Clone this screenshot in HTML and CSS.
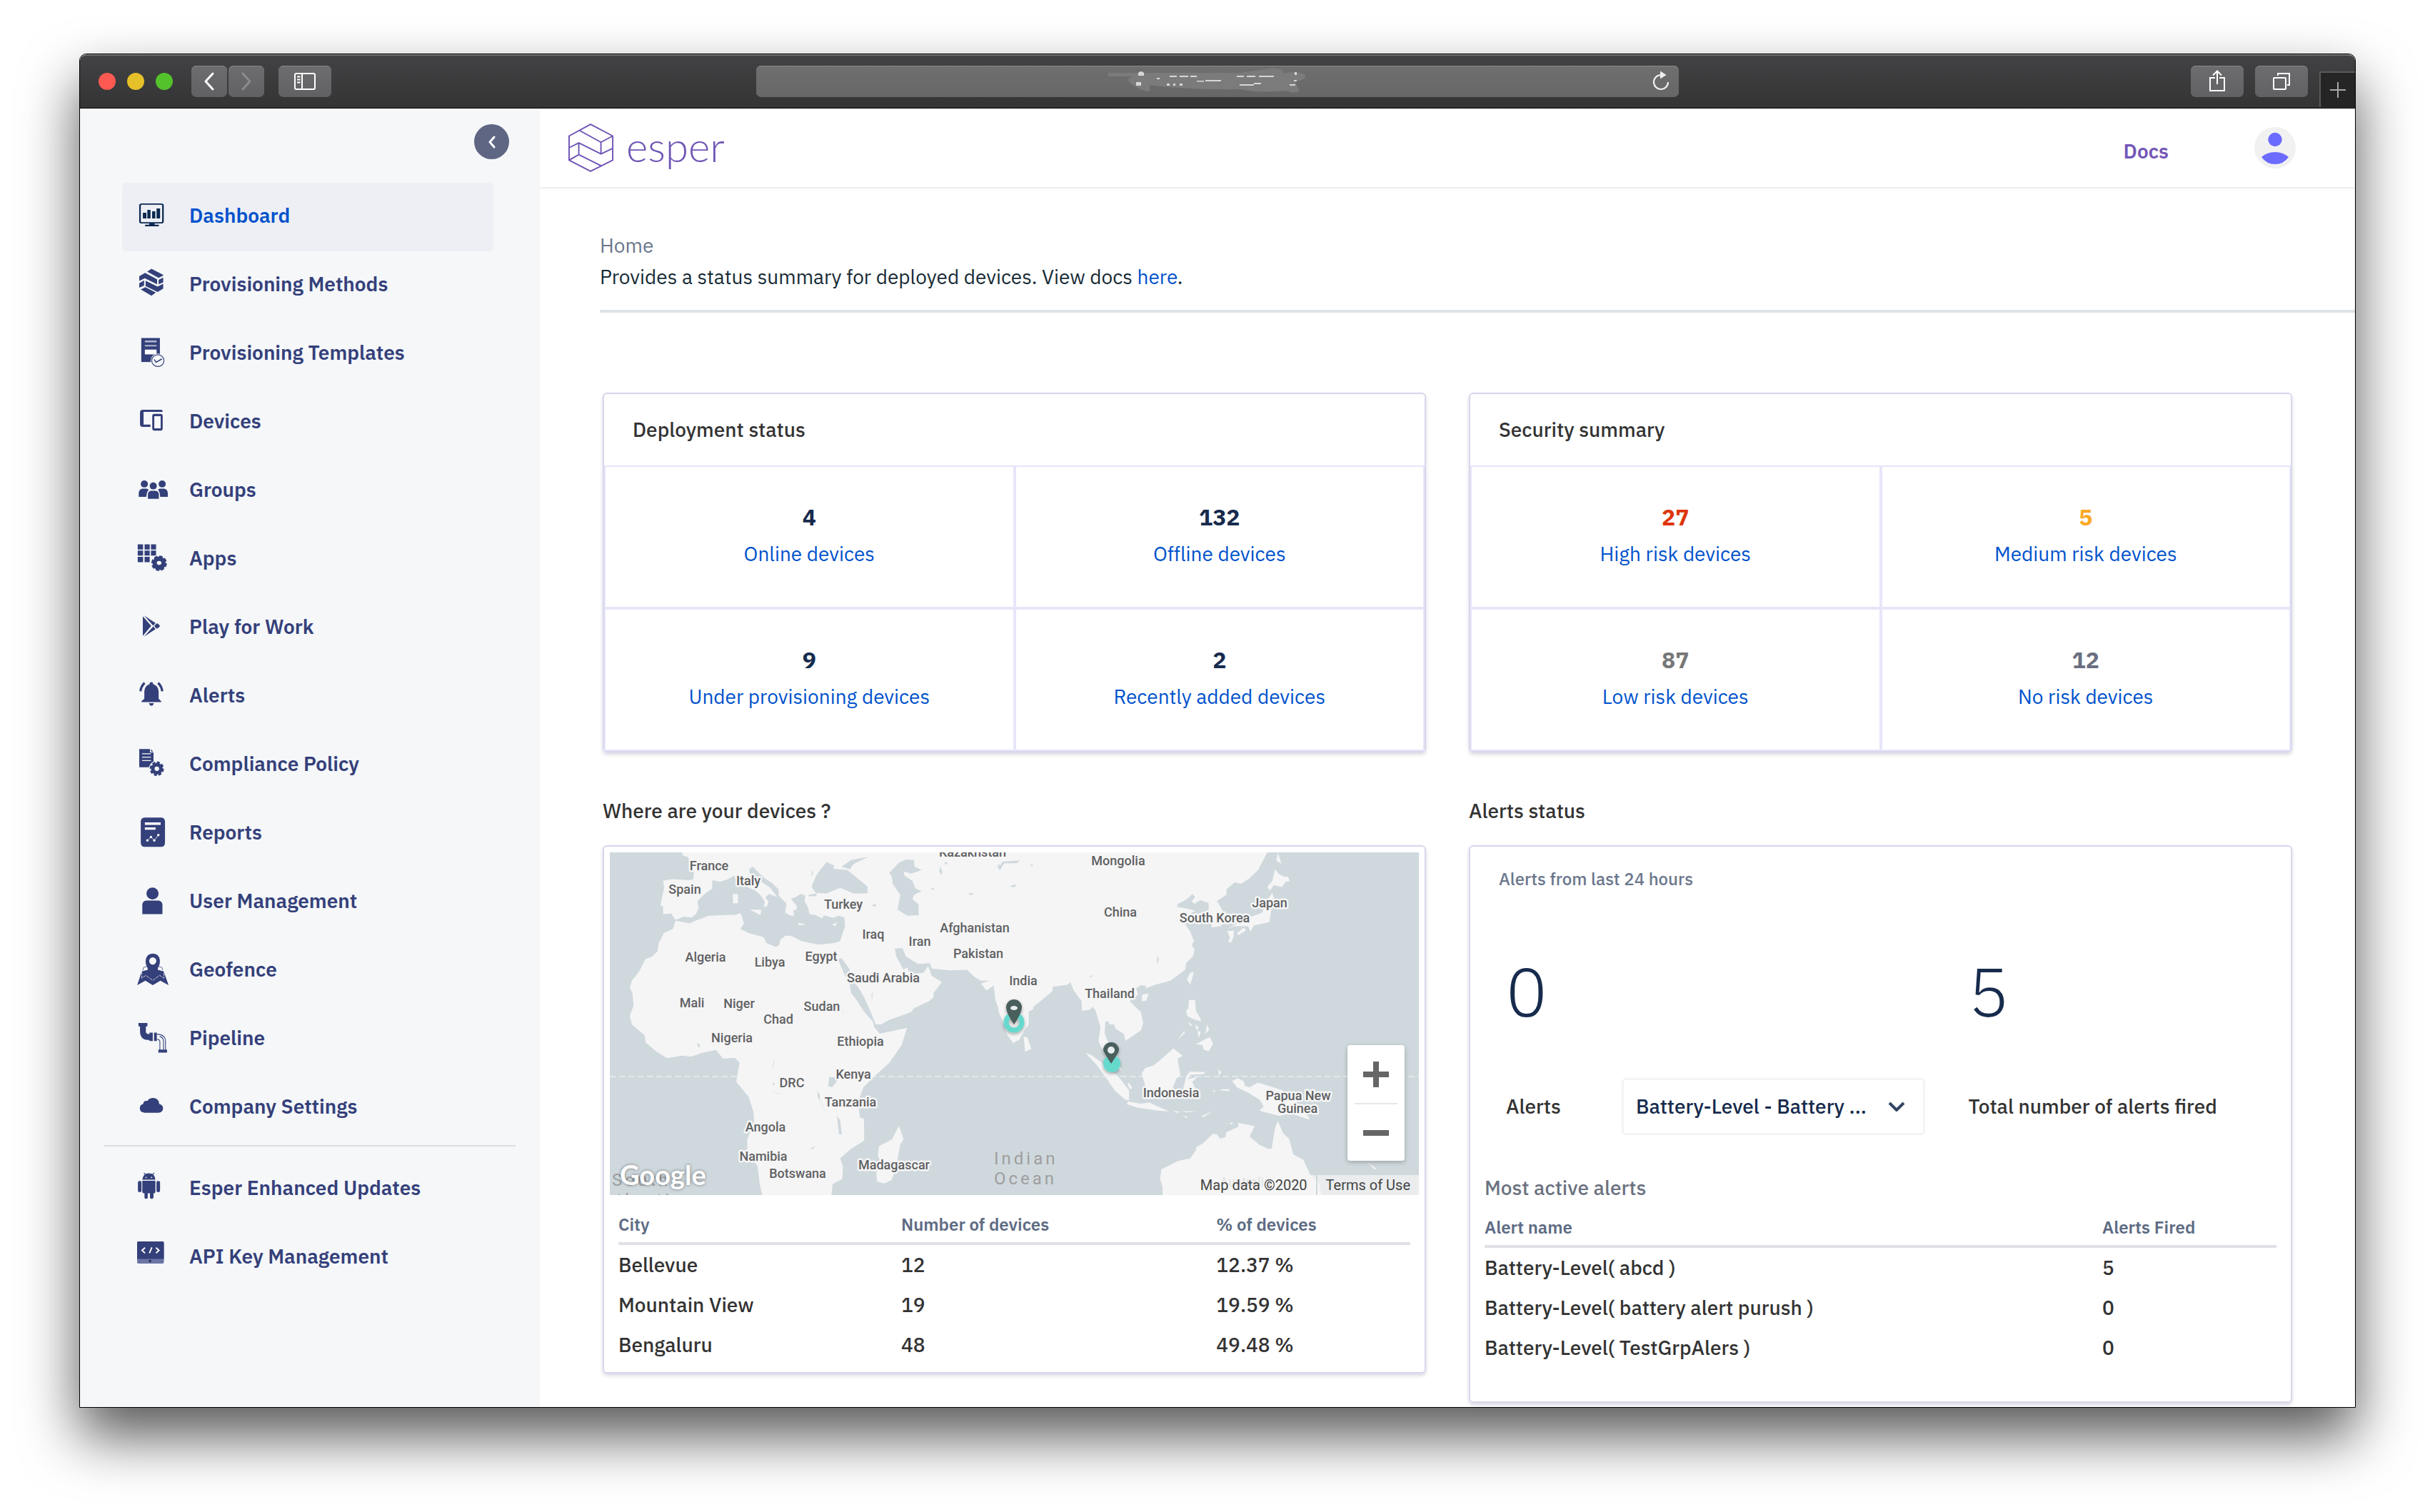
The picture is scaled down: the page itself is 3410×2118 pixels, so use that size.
FILE: index.html
```html
<!DOCTYPE html>
<html lang="en">
<head>
<meta charset="utf-8">
<title>Esper Dashboard</title>
<link rel="stylesheet" href="styles.css">
</head>
<body>
<div class="window">
  <div class="toolbar">
    <div class="toolbar-left">
      <div class="lights"><span class="light red"></span><span class="light yellow"></span><span class="light green"></span></div>
      <div class="history">
        <button class="tool nav-tool" aria-label="Back"><svg width="50" height="44" viewBox="0 0 50 44"><path d="M30 11L20 22L30 33" fill="none" stroke="#fff" stroke-width="3" stroke-linecap="round" stroke-linejoin="round"/></svg></button>
        <button class="tool nav-tool" aria-label="Forward"><svg width="50" height="44" viewBox="0 0 50 44"><path d="M20 11L30 22L20 33" fill="none" stroke="#8b8b8d" stroke-width="3" stroke-linecap="round" stroke-linejoin="round"/></svg></button>
      </div>
      <button class="tool" aria-label="Show sidebar"><svg width="74" height="44" viewBox="0 0 74 44"><g fill="none" stroke="#fff" stroke-width="2"><rect x="23" y="11" width="28" height="22" rx="2"/><path d="M33 11V33M26 15.500H30.500M26 19.500H30.500M26 23.500H30.500"/></g></svg></button>
    </div>
    <div class="address">
      <svg class="address-mark" width="278" height="40" viewBox="0 0 278 40" aria-hidden="true"><path d="M0 8H185L225 2Q245 0 246 9Q262 4 275 10Q280 18 262 20L268 34Q258 38 250 33Q215 37 185 31Q110 32 58 25Q60 35 54 34Q34 28 27 18Q32 12 40 13H0Z" fill="#7b7b7b"/><g fill="#efefef"><path d="M42 8Q46 4 50 8V12H42ZM39 21H46V26H39ZM86 12H96V14H86ZM100 12H112V14H100ZM115 12H124V14H115ZM82 23H86V26H82ZM91 23H94V26H91ZM100 23H104V26H100ZM124 19H134V20.500H124ZM136 18H158V20H136ZM180 12H190V14H180ZM194 12H206V14H194ZM211 12H232V14H211ZM184 24H204V26H184ZM204 22H214V24H204ZM261 7H264V11H261ZM260 18H264V20H260ZM254 24H262V26H254ZM68 15H72V17H68Z" opacity=".8"/></g></svg>
      <button class="reload" aria-label="Reload"><svg width="26" height="30" viewBox="0 0 26 30"><path d="M13 6A10 10 0 1 0 23 16" fill="none" stroke="#f0f0f0" stroke-width="2.200"/><path d="M12 0.500L20.500 6L12 11.500Z" fill="#f0f0f0"/></svg></button>
    </div>
    <div class="toolbar-right">
      <button class="tool" aria-label="Share"><svg width="74" height="44" viewBox="0 0 74 44"><g fill="none" stroke="#fff" stroke-width="2"><path d="M34 17H27V35H47V17H40M37 26V8M31 13.500L37 7.500L43 13.500"/></g></svg></button>
      <button class="tool" aria-label="Show tabs"><svg width="74" height="44" viewBox="0 0 74 44"><g fill="none" stroke="#fff" stroke-width="2"><rect x="26" y="17" width="17" height="16" rx="1"/><path d="M32 14V11H48V27H45"/></g></svg></button>
      <button class="new-tab" aria-label="New tab"><svg width="24" height="24" viewBox="0 0 24 24"><path d="M12 1V23M1 12H23" stroke="#a9a9a9" stroke-width="2"/></svg></button>
    </div>
  </div>

  <div class="app">
    <aside class="sidebar">
      <button class="collapse" aria-label="Collapse menu"><svg width="20" height="20" viewBox="0 0 20 20"><path d="M13 3L7 10L13 17" fill="none" stroke="#fff" stroke-width="3" stroke-linecap="round" stroke-linejoin="round"/></svg></button>
      <nav>
        <ul class="menu">
          <li><a class="item active" href="#"><svg class="icon" viewBox="0 0 56 56"><g transform="translate(-104 -226) scale(.4464 .3333)" fill="#0a2850"><rect x="260" y="707.500" width="72" height="79" rx="6" fill="none" stroke="#0a2850" stroke-width="5"/><path d="M269 744H280V768H269ZM283 732H293V768H283ZM298 738H308V768H298ZM312 726H323V768H312ZM289 787H306V794H319V801H276V794H289Z"/></g></svg>Dashboard</a></li>
          <li><a class="item" href="#"><svg class="icon" viewBox="0 0 56 56"><path transform="translate(-54 -12) scale(.3571 .3954)" d="M213 52L230 42L276 63V66L258 74ZM182 68L205 56L252 79V97L204 75L182 85ZM258 81L276 73V90L258 97ZM182 93L201 83V101L182 109ZM207 84L254 105L276 95V112L254 124L207 103ZM206 107L247 126L230 137L188 115Z"/></svg>Provisioning Methods</a></li>
          <li><a class="item" href="#"><svg class="icon" viewBox="0 0 56 56"><g transform="translate(-54 -108) scale(.3571 .3954)"><rect x="190" y="287" width="73" height="85"/><path d="M204 296H250V302H204ZM204 312H250V317H204Z" fill="#b4b9d0"/><path d="M204 328H250V345H204Z" fill="#fff"/><ellipse cx="255" cy="367" rx="28" ry="25" fill="#f5f7f9"/><ellipse cx="255" cy="367" rx="24" ry="21" fill="#f5f7f9" stroke="#34407a" stroke-width="3"/><path d="M241 363L248 373L271 361" fill="none" stroke="#34407a" stroke-width="4"/></g></svg>Provisioning Templates</a></li>
          <li><a class="item" href="#"><svg class="icon" viewBox="0 0 56 56"><g transform="translate(-54 -204) scale(.3571 .3954)"><path d="M268 541H195Q185 541 185 551V592Q185 602 195 602H226V594H199V549H274Q274 541 268 541Z"/><rect x="237" y="560" width="33" height="51" rx="4" fill="none" stroke="#34407a" stroke-width="8"/></g></svg>Devices</a></li>
          <li><a class="item" href="#"><svg class="icon" viewBox="0 0 56 56"><g transform="translate(-54 -300) scale(.3571 .3954)"><ellipse cx="202" cy="804" rx="14" ry="12.500"/><ellipse cx="272" cy="804" rx="14" ry="12.500"/><ellipse cx="237" cy="811" rx="14" ry="12.500"/><path d="M180 850V836Q181 823 194 821H211Q218 822 219 826Q211 830 210 850ZM294 850V836Q293 823 280 821H263Q256 822 256 826Q263 830 264 850ZM216 857V840Q217 829 228 828H246Q258 829 259 840V857Z"/></g></svg>Groups</a></li>
          <li><a class="item" href="#"><svg class="icon" viewBox="0 0 56 56"><g transform="translate(-54 -396) scale(.3571 .3954)"><path d="M176 1018H197V1036H176ZM203 1018H223V1036H203ZM228 1018H248V1036H228ZM176 1040H197V1058H176ZM203 1040H223V1058H203ZM228 1040H248V1058H228ZM176 1062H197V1081H176ZM203 1062H223V1081H203Z"/><ellipse cx="260" cy="1085" rx="33" ry="30" fill="#f5f7f9"/><ellipse cx="260" cy="1085" rx="26" ry="24"/><ellipse cx="260" cy="1085" rx="27" ry="24" fill="none" stroke="#34407a" stroke-width="7" stroke-dasharray="13 7"/><ellipse cx="260" cy="1084" rx="9" ry="7" fill="#f5f7f9"/></g></svg>Apps</a></li>
          <li><a class="item" href="#"><svg class="icon" viewBox="0 0 56 56"><path transform="translate(-54 -492) scale(.3571 .3954)" d="M196 1273L229 1307L196 1342ZM201 1270L246 1297L237 1306ZM201 1345L246 1318L237 1309ZM249 1299L255 1299L264 1307L255 1316L249 1316L241 1307.500Z"/></svg>Play for Work</a></li>
          <li><a class="item" href="#"><svg class="icon" viewBox="0 0 56 56"><g transform="translate(-54 -8) scale(.3571 .3954)"><path d="M202 98V72Q204 51 223 46V42Q230 36 236 42V46Q256 51 258 72V98L268 107V110H191V107ZM220 114H239Q237 123 230 123Q223 123 220 114Z"/><path d="M187 72Q188 55 203 42M272 72Q271 55 256 42" fill="none" stroke="#34407a" stroke-width="9"/></g></svg>Alerts</a></li>
          <li><a class="item" href="#"><svg class="icon" viewBox="0 0 56 56"><g transform="translate(-54 -104) scale(.3571 .3954)"><path d="M182 276H224V288H238V341H182Z"/><path d="M228 277L237 285H228Z"/><path d="M193 293H228M193 305H228M193 317H228" stroke="#f5f7f9" stroke-width="3"/><ellipse cx="251" cy="346" rx="31" ry="28" fill="#f5f7f9"/><ellipse cx="251" cy="346" rx="23" ry="21"/><ellipse cx="251" cy="346" rx="24" ry="22" fill="none" stroke="#34407a" stroke-width="8" stroke-dasharray="11 7"/><ellipse cx="251" cy="346" rx="9" ry="8" fill="#f5f7f9"/></g></svg>Compliance Policy</a></li>
          <li><a class="item" href="#"><svg class="icon" viewBox="0 0 56 56"><g transform="translate(-54 -200) scale(.3571 .3954)"><rect x="188" y="519" width="95" height="104" rx="14"/><path d="M204 536H266V545H204ZM204 554H246V562H204Z" fill="#fff"/><path d="M214 600L228 588L241 600L257 581" fill="none" stroke="#fff" stroke-width="2"/><g fill="#fff"><circle cx="214" cy="600" r="4.500"/><circle cx="228" cy="588" r="4.500"/><circle cx="241" cy="600" r="4.500"/><circle cx="257" cy="581" r="4.500"/></g></g></svg>Reports</a></li>
          <li><a class="item" href="#"><svg class="icon" viewBox="0 0 56 56"><g transform="translate(-54 -296) scale(.3571 .3954)"><ellipse cx="234" cy="788" rx="24" ry="21"/><path d="M194 861V828Q195 814 210 813H256Q272 814 273 828V861Z"/></g></svg>User Management</a></li>
          <li><a class="item" href="#"><svg class="icon" viewBox="0 0 56 56"><g transform="translate(-54 -392) scale(.3571 .3954)"><path d="M174 1113L192 1064L218 1058H252L278 1064L297 1113L265 1097L235 1113L206 1097Z"/><path d="M196 1060L199 1050L214 1046M274 1060L271 1050L256 1046" fill="none" stroke="#34407a" stroke-width="2"/><path d="M192 1064V1088L208 1078L235 1096L262 1078L279 1088V1064" fill="none" stroke="#f5f7f9" stroke-width="2" stroke-dasharray="12 3"/><path d="M235 1092Q216 1070 214 1050Q207 1042 207 1027Q210 1001 235 1001Q261 1001 263 1027Q263 1042 256 1050Q254 1070 235 1092Z"/><ellipse cx="235" cy="1027" rx="14" ry="13" fill="#f5f7f9"/></g></svg>Geofence</a></li>
          <li><a class="item" href="#"><svg class="icon" viewBox="0 0 56 56"><g transform="translate(-54 -488) scale(.3571 .3954)"><path d="M179 1247H214V1259H208V1280Q210 1286 218 1286H222V1281H235V1311H222V1307H212Q187 1305 185 1280V1259H179ZM240 1281H251V1311H240ZM257 1341H291V1352H257Z"/><path d="M251 1287H258Q284 1290 285 1310V1342M251 1305H256Q263 1306 263 1313V1342M277 1342V1312Q276 1296 262 1295" fill="none" stroke="#34407a" stroke-width="3"/></g></svg>Pipeline</a></li>
          <li><a class="item" href="#"><svg class="icon" viewBox="0 0 56 56"><path transform="translate(-54 -4) scale(.3827)" d="M190 101Q172 100 172 85Q172 72 184 69Q186 56 200 58Q206 47 222 47Q242 49 243 69Q257 72 257 86Q256 100 240 101Z"/></svg>Company Settings</a></li>
        </ul>
        <hr class="menu-rule">
        <ul class="menu">
          <li><a class="item" href="#"><svg class="icon" viewBox="0 0 56 56"><g transform="translate(-54 -118) scale(.3827)"><path d="M181 346Q184 323 205 323Q227 323 229 346ZM181 350H229V390Q229 396 222 396V412Q220 416 215 416Q210 416 209 412V396H201V412Q200 416 195 416Q190 416 189 412V396Q181 396 181 390Z"/><path d="M187 321L193 329M224 321L218 329" stroke="#34407a" stroke-width="3"/><rect x="165" y="351" width="13" height="41" rx="6"/><rect x="233" y="351" width="13" height="41" rx="6"/><circle cx="195" cy="338" r="2.500" fill="#f5f7f9"/><circle cx="215" cy="338" r="2.500" fill="#f5f7f9"/></g></svg>Esper Enhanced Updates</a></li>
          <li><a class="item" href="#"><svg class="icon" viewBox="0 0 56 56"><g transform="translate(-54 -214) scale(.3827)"><rect x="162" y="572" width="98" height="81" rx="5" fill="#6a75a5"/><path d="M162 636V577Q162 572 167 572H255Q260 572 260 577V636Z"/><rect x="206" y="640" width="7" height="8" fill="#1d2750"/><path d="M191 595L180 605L191 615M216 594L207 615M231 595L242 605L231 615" fill="none" stroke="#fff" stroke-width="5"/></g></svg>API Key Management</a></li>
        </ul>
      </nav>
    </aside>

    <main class="main">
      <header class="header">
        <a class="brand" href="#"><svg width="64" height="72" viewBox="0 0 66 72" fill="none" stroke="#6f55b5" stroke-width="2" stroke-linejoin="round"><path d="M1 19L32 2L64 19V54L32 70L1 54ZM16 11L47 28L64 19M1 36L15 29L47 45L64 37M1 54L15 46L47 62M47 28V45M15 29V46"/></svg><span class="wordmark">esper</span></a>
        <div class="header-right">
          <a class="docs" href="#">Docs</a>
          <button class="avatar" aria-label="Account"><svg width="58" height="58" viewBox="0 0 58 58"><circle cx="29" cy="29" r="29" fill="#f1f1f2"/><circle cx="29" cy="17.500" r="9.700" fill="#6b6bff"/><path d="M10 42Q18 35 29 35Q40 35 48 42Q41 52 29 52Q17 52 10 42Z" fill="#6b6bff"/></svg></button>
        </div>
      </header>

      <div class="intro">
        <p class="crumb">Home</p>
        <p>Provides a status summary for deployed devices. View docs <a href="#">here</a>.</p>
      </div>

      <div class="grid">
        <section class="card stats">
          <h2 class="stats-title">Deployment status</h2>
          <div class="cells">
            <div class="cell"><strong>4</strong><a href="#">Online devices</a></div>
            <div class="cell"><strong>132</strong><a href="#">Offline devices</a></div>
            <div class="cell"><strong>9</strong><a href="#">Under provisioning devices</a></div>
            <div class="cell"><strong>2</strong><a href="#">Recently added devices</a></div>
          </div>
        </section>
        <section class="card stats">
          <h2 class="stats-title">Security summary</h2>
          <div class="cells">
            <div class="cell high"><strong>27</strong><a href="#">High risk devices</a></div>
            <div class="cell medium"><strong>5</strong><a href="#">Medium risk devices</a></div>
            <div class="cell low"><strong>87</strong><a href="#">Low risk devices</a></div>
            <div class="cell none"><strong>12</strong><a href="#">No risk devices</a></div>
          </div>
        </section>

        <section>
          <h2 class="section-title">Where are your devices ?</h2>
          <div class="card map-card">
            <div class="map">
              <svg class="map-art" viewBox="0 0 1133 480" preserveAspectRatio="xMidYMid slice">
                <defs><filter id="glow" x="-30%" y="-30%" width="160%" height="160%"><feDropShadow dx="0" dy="2" stdDeviation="2" flood-opacity=".35"/></filter></defs>
                <rect width="1133" height="480" fill="#cfd8dd"/>
                <path d="M0 314H1133" stroke="#e3e8ea" stroke-width="2" stroke-dasharray="9 4"/>
                <g transform="translate(-14.200 -84.200) scale(.3827)" fill="#f5f5f5">
                  <path d="M298 215L305 232L325 238L328 262L345 290L343 318L330 322L265 318L232 324L236 350L228 385L222 415L232 418V446L262 444L276 466L288 464L305 456L338 458L352 446L362 425L358 398L384 372L412 352V322L440 328L470 318L492 304L505 335L540 347L570 360L590 378L604 400L600 420L612 418L618 400L606 385L620 372L650 384L625 350L595 330L565 308L548 295V280L560 272L568 280L600 312L630 332L655 355V378L684 408L678 440L695 450L712 452L708 430L718 432L722 418L700 390L715 385L735 372L752 378L750 400L762 420L768 446L790 450L815 462L820 450L855 460L875 452L895 458L898 490L880 545L860 552L800 558L740 545L700 525L680 525L660 540L658 558L645 566L610 552L600 530L545 515L515 500L528 480L520 455L515 443L500 448L400 452L350 470L330 480L278 470L268 500L235 515L215 555L212 582L190 603L168 610L145 655L118 690L110 715L120 735L124 780L110 820L118 850L165 890L168 915L205 948L247 973L300 964L335 968L370 955L425 943L452 975L495 972L512 990L502 1045L500 1060L545 1115L563 1170L565 1210L540 1270V1310L578 1370L585 1430L596 1480H848L852 1435L888 1415L890 1370L880 1340L920 1305L968 1275L967 1195L952 1190L946 1130L965 1080L1010 1035L1060 990L1105 925L1125 862L1025 884L1005 860L1000 840L965 800L940 760L920 735L915 705L895 665L872 612L885 607L915 648L914 680L945 712L965 745L990 800L1010 850H1030L1060 833L1140 805L1150 790L1205 765L1222 750V735L1252 695L1215 672L1202 636L1185 660L1150 665L1130 655L1126 640L1112 650L1085 600L1080 572L1108 570L1120 600L1165 628L1208 626L1215 645L1280 652L1345 650L1370 675L1395 690L1425 690L1395 700L1415 725L1442 708L1448 760L1480 850L1490 885L1513 918L1536 905L1548 880L1570 850V215Z"/>
                  <path d="M487 372H506V406H488ZM550 430H592L588 450L570 440ZM725 478L750 482V486H727ZM850 485L870 475L862 490ZM1095 1220L1112 1270L1100 1290L1085 1370L1068 1420L1040 1432L1015 1425L1012 1395L1028 1355L1018 1330L1022 1295L1070 1270Z"/>
                  <path fill="#cfd8dd" d="M775 345L795 300L830 255L858 268L855 280L905 285L925 300L980 345V370L930 370L880 350L830 370L790 368ZM885 272L920 248L985 236L930 262L915 282ZM772 306L780 282V300ZM765 375L795 370L792 381H765ZM1060 295L1095 258L1122 246L1150 248L1152 272L1178 285L1140 298L1113 290L1115 305L1145 325L1155 352L1178 362L1150 376L1145 392L1167 410V450L1125 452L1090 430L1100 375L1072 335L1070 310ZM1245 270L1254 290L1250 304L1243 290ZM1258 254L1275 260L1268 266ZM1455 270L1470 254L1540 250L1530 260H1480L1464 287ZM1498 344L1527 337L1515 348ZM1345 370H1372L1360 377ZM1210 355L1222 348V357ZM995 415L1010 408V420ZM840 1042L870 1045L866 1060L850 1080L836 1076ZM868 1185L880 1200L886 1252H876ZM796 1092L806 1110V1130L798 1115ZM768 1306L790 1294L780 1306ZM355 918L367 922L364 938ZM1000 730L996 765L995 740ZM642 975L636 1000L630 1020L636 990ZM632 1070L638 1060L640 1072Z"/>
                  <path d="M808 1130L826 1168M635 1095L668 1106M885 795L895 813" stroke="#dfe5e8" stroke-width="2"/>
                </g>
                <g transform="translate(546 -84.200) scale(.3954 .3827)" fill="#f5f5f5">
                  <path d="M0 215H950L930 255L915 285L885 315L855 335L832 330L803 355V375L770 398L785 425L795 445L785 490L752 495L740 430V405L710 395L690 408L680 400L692 382L682 372L665 390L630 410L628 420L660 425L694 434L650 455L655 480L675 510L688 545L680 560L690 575L685 600L660 625L657 650L605 690L550 705L517 718V708L500 706L483 718L490 740L460 765L500 805L508 845L500 872L445 910L440 885L410 865L405 850H388L385 838L374 840L372 885L380 905L410 950L422 985L432 1020L410 1005L375 965L350 912L357 860L340 800L330 785L318 796L292 800L290 765L262 725L250 695L240 705L187 712V728L120 785L118 795L85 810L82 850L85 880L50 918L28 890L15 850L-5 800Z"/>
                  <path d="M85 895L98 897L112 940L90 950ZM305 955L325 962L355 985L420 1040L458 1090V1128L445 1125L410 1095L380 1050L345 1000ZM455 1132L500 1140L530 1136L560 1150L600 1168L560 1165L490 1155L450 1142ZM452 1065H460L470 1085H460ZM615 937L648 965L630 975L640 1035L625 1050L605 1100L520 1090L503 1030L515 1010L545 1000L580 970ZM665 1032L675 1022L725 1024L732 1022L720 1032L675 1034L667 1050L700 1042L682 1060L695 1090L660 1105L650 1085L658 1050ZM670 760H692L695 800L712 830V838L690 832L665 820L660 800L668 790ZM725 905L745 896L756 920L740 948L722 942L718 925L695 922ZM668 840L682 852L675 856ZM692 852L705 860L698 872ZM735 850L742 870L728 885ZM700 875L712 875L706 900ZM655 872V882L628 908ZM675 660L688 658L675 705L663 685ZM505 740L527 737L520 762L503 765ZM975 283L990 300L1010 310L1020 308L1028 325L1012 328L1000 347L970 340L958 360L948 348L952 340L965 325ZM965 368L975 400L962 430L955 475L900 488L888 510L880 490L830 490L805 500L850 475L880 460L930 440L945 400ZM805 508L830 506L828 530L820 550L810 548L815 530ZM840 515L865 496L872 506L845 523ZM985 220L998 262L980 250ZM823 1056L845 1047L865 1058L868 1075L885 1080L915 1063L1000 1090L1050 1130L1065 1165L1097 1190L1095 1198L1030 1175L990 1185L920 1165L935 1150L920 1125L880 1100L840 1080ZM758 1090L765 1096L755 1097ZM778 1088L810 1086L816 1094L790 1092ZM775 1015L785 1025L776 1038ZM615 1165L640 1170L625 1173ZM645 1168L700 1167L660 1172ZM755 1168L720 1190L715 1185ZM648 1185L665 1187L662 1192ZM814 1210L828 1210L820 1216ZM1300 1352L1335 1378L1328 1380ZM577 1480V1445L568 1415L573 1380L630 1350L675 1340L695 1310V1300L720 1285L755 1250L770 1252L780 1268L800 1262L802 1245L845 1225V1210L903 1222L885 1260L920 1290L950 1305H963L975 1230L985 1203L1005 1250L1025 1268L1040 1325L1075 1345L1100 1400L1130 1430L1142 1480Z"/>
                  <path fill="#cfd8dd" d="M557 595L564 612L558 630ZM0 270L10 254L72 250L60 260H15L0 287ZM34 344L60 337L52 348ZM108 268L116 262V273ZM320 672L332 670L320 678Z"/>
                </g>
                <g class="sea-label"><text x="538" y="437">Indian</text><text x="538" y="465">Ocean</text><text x="3" y="467">South</text><text x="-10" y="495">Atlantic</text></g>
                <g class="country">
                  <text x="139" y="25">France</text><text x="194" y="46">Italy</text><text x="105" y="58">Spain</text><text x="327" y="79">Turkey</text><text x="369" y="121">Iraq</text><text x="434" y="131">Iran</text><text x="511" y="112">Afghanistan</text><text x="516" y="148">Pakistan</text><text x="508" y="6">Kazakhstan</text><text x="134" y="153">Algeria</text><text x="224" y="160">Libya</text><text x="296" y="152">Egypt</text><text x="383" y="182">Saudi Arabia</text><text x="115" y="217">Mali</text><text x="181" y="218">Niger</text><text x="297" y="222">Sudan</text><text x="236" y="240">Chad</text><text x="171" y="266">Nigeria</text><text x="351" y="271">Ethiopia</text><text x="341" y="317">Kenya</text><text x="255" y="329">DRC</text><text x="337" y="356">Tanzania</text><text x="218" y="391">Angola</text><text x="215" y="432">Namibia</text><text x="263" y="456">Botswana</text><text x="398" y="444">Madagascar</text><text x="712" y="18">Mongolia</text><text x="715" y="90">China</text><text x="847" y="98">South Korea</text><text x="924" y="77">Japan</text><text x="579" y="186">India</text><text x="700" y="204">Thailand</text><text x="786" y="343">Indonesia</text><text x="964" y="347">Papua New</text><text x="963" y="365">Guinea</text><text x="890" y="468" opacity=".4">Australia</text>
                </g>
                <g filter="url(#glow)"><circle cx="566" cy="238" r="11" fill="none" stroke="#66d9cd" stroke-width="7"/><path d="M566 241Q555 225 555 217A11 11 0 0 1 577 217Q577 225 566 241Z" fill="#4a5e5c"/></g>
                <ellipse cx="566" cy="218" rx="5" ry="3" fill="#e9eeee"/>
                <g filter="url(#glow)"><circle cx="703" cy="296" r="12" fill="#66d9cd"/><path d="M702 296Q691 279 691 277A11 11 0 1 1 713 277Q713 280 702 296Z" fill="#4a5e5c"/></g>
                <circle cx="702" cy="277" r="5" fill="#e9eeee"/>
              </svg>
              <span class="google">Google</span>
              <div class="zoom"><button aria-label="Zoom in"><svg width="36" height="36" viewBox="0 0 36 36"><path d="M14 0H22V14H36V22H22V36H14V22H0V14H14Z" fill="#666"/></svg></button><button aria-label="Zoom out"><svg width="36" height="36" viewBox="0 0 36 36"><path d="M0 14H36V22H0Z" fill="#666"/></svg></button></div>
              <div class="attribution"><span>Map data ©2020</span><a href="#">Terms of Use</a></div>
            </div>
            <table class="table cities">
              <thead><tr><th scope="col">City</th><th scope="col">Number of devices</th><th scope="col">% of devices</th></tr></thead>
              <tbody>
                <tr><td>Bellevue</td><td>12</td><td>12.37 %</td></tr>
                <tr><td>Mountain View</td><td>19</td><td>19.59 %</td></tr>
                <tr><td>Bengaluru</td><td>48</td><td>49.48 %</td></tr>
              </tbody>
            </table>
          </div>
        </section>

        <section>
          <h2 class="section-title">Alerts status</h2>
          <div class="card alerts-card">
            <h3 class="sub">Alerts from last 24 hours</h3>
            <div class="figures"><span>0</span><span>5</span></div>
            <div class="filters">
              <div class="picker">
                <label for="alert-type">Alerts</label>
                <div class="select-box">
                  <select id="alert-type"><option>Battery-Level - Battery ...</option></select>
                  <svg class="chevron" width="24" height="14" viewBox="0 0 24 14"><path d="M2 2L12 12L22 2" fill="none" stroke="#344563" stroke-width="4"/></svg>
                </div>
              </div>
              <span>Total number of alerts fired</span>
            </div>
            <h3 class="active-title">Most active alerts</h3>
            <table class="table fired">
              <thead><tr><th scope="col">Alert name</th><th scope="col">Alerts Fired</th></tr></thead>
              <tbody>
                <tr><td>Battery-Level( abcd )</td><td>5</td></tr>
                <tr><td>Battery-Level( battery alert purush )</td><td>0</td></tr>
                <tr><td>Battery-Level( TestGrpAlers )</td><td>0</td></tr>
              </tbody>
            </table>
          </div>
        </section>
      </div>
    </main>
  </div>
</div>
</body>
</html>
```
FILE: styles.css
```css
* { box-sizing: border-box; }
body {
  margin: 0;
  padding: 75px 111px 145px;
  background: #fff;
  color: #333;
  font-family: "IBM Plex Sans", Roboto, "Noto Sans", sans-serif;
  font-size: 28px;
  line-height: 36px;
}
h2, h3, p, ul { margin: 0; padding: 0; }
a { color: #0052cc; text-decoration: none; }
button { padding: 0; border: 0; background: none; font: inherit; cursor: pointer; }
svg { display: block; }

.window {
  border: 1px solid #000;
  border-radius: 10px 10px 0 0;
  background: #fff;
  box-shadow: 0 40px 80px rgba(0, 0, 0, .66);
}

/* Browser toolbar */
.toolbar {
  display: flex;
  align-items: center;
  height: 76px;
  padding-bottom: 1px;
  border-top: 2px solid #6f7170;
  border-bottom: 1px solid #000;
  border-radius: 9px 9px 0 0;
  background: linear-gradient(#424244, #343435);
}
.toolbar-left, .toolbar-right { flex: 1 1 0; display: flex; align-items: center; }
.toolbar-right { justify-content: flex-end; gap: 16px; align-self: stretch; }
.lights { display: flex; gap: 16px; margin: 0 26px; }
.light { width: 24px; height: 24px; border-radius: 50%; }
.red { background: #ff5a52; }
.yellow { background: #e6c029; }
.green { background: #54c22b; }
.history { display: flex; gap: 2px; margin-right: 20px; }
.tool {
  height: 44px;
  border-radius: 7px;
  background: linear-gradient(#6d6d6f, #616163);
  box-shadow: inset 0 1px #858587;
}
.address {
  flex: 0 1 1292px;
  display: grid;
  grid-template-columns: 1fr auto 1fr;
  align-items: center;
  height: 44px;
  border-radius: 7px;
  background: linear-gradient(#6f6f6f, #676768);
  box-shadow: inset 0 1px #8a8a8a;
}
.address-mark { grid-column: 2; margin-right: 28px; }
.reload { justify-self: end; margin-right: 12px; }
.new-tab {
  display: grid;
  place-items: center;
  align-self: flex-end;
  width: 50px;
  height: 50px;
  border: solid #5a5a5b;
  border-width: 2px 0 0 2px;
  background: #252526;
}

.app { display: flex; }

/* Sidebar */
.sidebar { flex: 0 0 644px; padding: 22px 0 40px; background: #f5f7f9; }
.collapse {
  display: grid;
  place-items: center;
  width: 49px;
  height: 49px;
  margin: 0 43px 33px auto;
  border-radius: 50%;
  background: #5e6684;
}
.menu { list-style: none; padding: 0 65px 0 59px; }
.item {
  display: flex;
  align-items: center;
  gap: 25px;
  height: 96px;
  padding: 0 0 4px 13px;
  border-radius: 6px;
  color: #34407a;
  font-weight: 600;
}
.active { background: #edeff5; color: #0052cc; }
.icon { width: 56px; height: 56px; margin-top: 4px; fill: #34407a; }
.menu-rule { margin: 4px 34px 12px; border: 0; border-top: 2px solid #dadde1; }

/* Page header */
.main { flex: 1; min-width: 0; }
.header {
  display: flex;
  align-items: center;
  justify-content: space-between;
  height: 112px;
  padding: 0 83px 0 40px;
  border-bottom: 2px solid #eee;
}
.brand { display: flex; align-items: center; gap: 17px; color: #6f55b5; }
.wordmark { padding-bottom: 4px; font: 300 58px/64px Lato, sans-serif; }
.header-right { display: flex; align-items: center; gap: 120px; }
.docs { padding-top: 9px; color: #7457b8; font-weight: 600; }

.intro {
  margin-left: 84px;
  padding: 58px 0 24px;
  border-bottom: 4px solid #dfe3e6;
  color: #172b36;
  line-height: 44px;
}
.crumb { color: #6b778c; }

/* Cards */
.grid {
  display: grid;
  grid-template-columns: repeat(2, minmax(0, 1fr));
  gap: 64px 60px;
  align-items: start;
  padding: 112px 88px 6px;
}
.card {
  border: 2px solid #d7d7ec;
  border-radius: 6px;
  box-shadow: 0 3px 5px rgba(60, 60, 110, .2);
}
.stats-title {
  height: 100px;
  padding: 32px 40px;
  font-size: 28px;
  font-weight: 500;
}
.cells { display: grid; grid-template-columns: 1fr 1fr; }
.cell {
  display: flex;
  flex-direction: column;
  align-items: center;
  gap: 14px;
  height: 200px;
  padding-top: 50px;
  border: 2px solid #e6e5f9;
}
.cell strong { color: #172b4d; font-size: 32px; line-height: 40px; }
.high strong { color: #de350b; }
.medium strong { color: #f9a825; }
.low strong { color: #777; }
.none strong { color: #6b6f80; }

.section-title { margin-bottom: 30px; font-size: 28px; font-weight: 500; }

/* Map */
.map-card { padding: 8px 8px 10px; }
.map { position: relative; height: 480px; overflow: hidden; }
.map-art { width: 100%; height: 100%; font-family: Roboto, sans-serif; }
.country text {
  fill: #5f6163;
  stroke: #f5f5f5;
  stroke-width: 5px;
  stroke-linejoin: round;
  paint-order: stroke;
  font-size: 18px;
  font-weight: 500;
  text-anchor: middle;
}
.sea-label text { fill: #9e9e9e; font-size: 24px; letter-spacing: 4px; }
.google {
  position: absolute;
  left: 14px;
  bottom: 2px;
  color: #fff;
  font: 700 38px/54px Lato, sans-serif;
  text-shadow: 0 0 4px rgba(0, 0, 0, .45);
}
.zoom {
  position: absolute;
  right: 20px;
  bottom: 48px;
  width: 80px;
  border-radius: 4px;
  background: #fff;
  box-shadow: 0 2px 6px rgba(0, 0, 0, .25);
}
.zoom button { display: grid; place-items: center; width: 60px; height: 81px; margin: 0 10px; }
.zoom button + button { border-top: 2px solid #e6e6e6; }
.attribution {
  position: absolute;
  right: 0;
  bottom: 0;
  display: flex;
  color: #444;
  font: 20px/28px Roboto, sans-serif;
}
.attribution span, .attribution a { padding: 0 12px; background: rgba(245, 245, 245, .7); color: inherit; }
.attribution a { border-left: 2px solid #cfd8dd; }

/* Tables */
.table { width: 100%; border-collapse: separate; border-spacing: 0; table-layout: fixed; font-weight: 500; }
.table th {
  height: 52px;
  padding: 0 0 2px;
  border-bottom: 4px solid #dfe1e6;
  color: #5e6c84;
  font-size: 24px;
  font-weight: 600;
  text-align: left;
}
.table td { height: 56px; padding: 0; }
.cities { width: calc(100% - 24px); margin: 18px 12px 0; }
.cities th:nth-child(1) { width: 35.7%; }
.cities th:nth-child(2) { width: 39.8%; }
.fired th:nth-child(1) { width: 78%; }

/* Alerts */
.alerts-card { padding: 29px 20px 47px; }
.sub { margin-left: 20px; color: #6b778c; font-size: 24px; font-weight: 500; line-height: 32px; }
.figures, .filters { display: grid; grid-template-columns: 3fr 2fr; margin-left: 30px; }
.figures { margin-top: 85px; color: #172b4d; font-size: 96px; font-weight: 300; line-height: 112px; }
.filters { align-items: center; margin-top: 66px; font-weight: 500; }
.picker { display: flex; align-items: center; }
.picker label { flex: 0 0 162px; }
.select-box { position: relative; flex: 0 1 425px; }
.select-box select {
  appearance: none;
  width: 100%;
  height: 80px;
  padding: 0 64px 0 17px;
  border: 3px solid #f4f4f5;
  border-radius: 6px;
  background: #fff;
  color: #172b4d;
  font: inherit;
}
.chevron { position: absolute; right: 28px; top: 33px; pointer-events: none; }
.active-title { margin: 56px 0 14px; color: #6b7280; font-size: 28px; font-weight: 500; }
```
